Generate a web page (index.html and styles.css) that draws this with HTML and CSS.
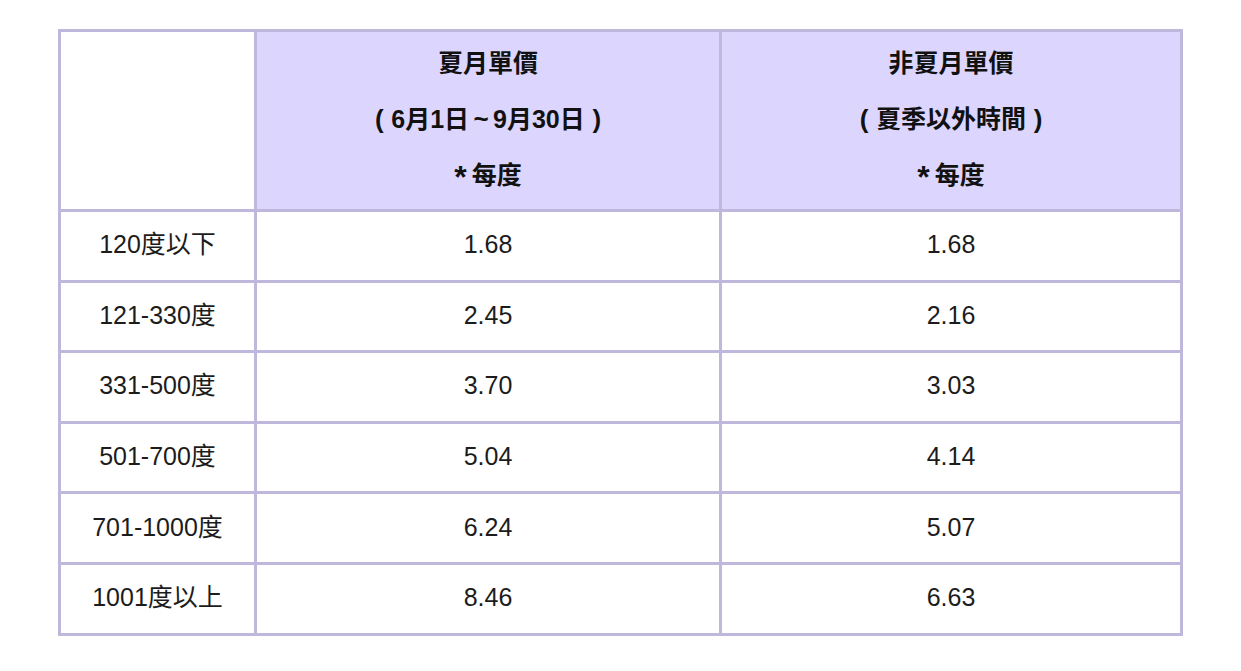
FILE: index.html
```html
<!DOCTYPE html>
<html lang="zh-Hant">
<head>
<meta charset="utf-8">
<title>電價表</title>
<link rel="stylesheet" href="styles.css">
</head>
<body>
<div class="wrap">
<table class="rates">
  <colgroup>
    <col class="c1">
    <col class="c2">
    <col class="c3">
  </colgroup>
  <thead>
    <tr>
      <th class="blank"></th>
      <th class="head">夏月單價<br><span class="fw">(</span>6月1日<span class="fw tilde">~</span>9月30日<span class="fw">)</span><br><span class="star">*</span>每度</th>
      <th class="head">非夏月單價<br><span class="fw">(</span>夏季以外時間<span class="fw">)</span><br><span class="star">*</span>每度</th>
    </tr>
  </thead>
  <tbody>
    <tr><td>120度以下</td><td>1.68</td><td>1.68</td></tr>
    <tr><td>121-330度</td><td>2.45</td><td>2.16</td></tr>
    <tr><td>331-500度</td><td>3.70</td><td>3.03</td></tr>
    <tr><td>501-700度</td><td>5.04</td><td>4.14</td></tr>
    <tr><td>701-1000度</td><td>6.24</td><td>5.07</td></tr>
    <tr><td>1001度以上</td><td>8.46</td><td>6.63</td></tr>
  </tbody>
</table>
</div>
</body>
</html>
```

FILE: styles.css
```css
html, body {
  margin: 0;
  padding: 0;
  background: #ffffff;
}
.wrap {
  padding: 29px 0 0 58px;
}
.rates {
  border-collapse: collapse;
  width: 1122px;
  table-layout: fixed;
  font-family: "Liberation Sans", "Noto Sans CJK TC", sans-serif;
  font-size: 25px;
  color: #1c1c1c;
}
.c1 { width: 196px; }
.c2 { width: 465px; }
.c3 { width: 461px; }
.rates th, .rates td {
  border: 3px solid #bfb8dc;
  text-align: center;
  vertical-align: middle;
  padding: 0;
}
.rates th {
  height: 173px;
  padding-bottom: 4px;
  background: #dcd6fe;
  font-weight: bold;
  line-height: 56px;
  color: #111;
  font-size: 25px;
}
.rates th.blank {
  background: #ffffff;
}
.fw {
  display: inline-block;
  width: 24px;
  text-align: center;
  font-size: 26px;
}
.star {
  display: inline-block;
  font-size: 32px;
  line-height: 20px;
  vertical-align: -4px;
  margin-right: 5px;
}
.rates td {
  height: 64.6px;
  padding-bottom: 3px;
  line-height: 28px;
}
```
